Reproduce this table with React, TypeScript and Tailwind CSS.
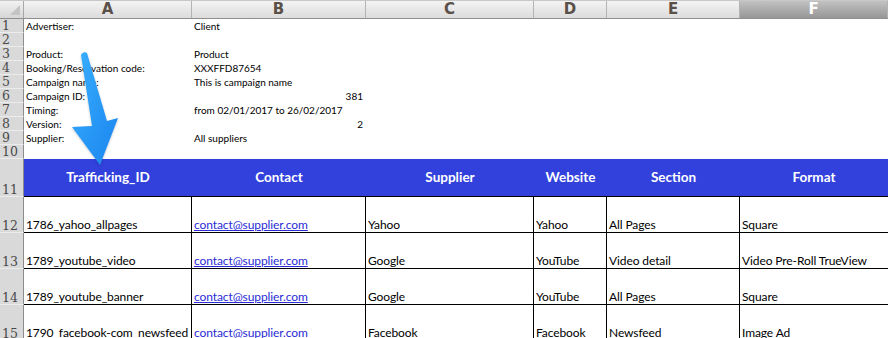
const cols = [
  { key: "A", w: "w-[168px]" },
  { key: "B", w: "w-[174px]" },
  { key: "C", w: "w-[168px]" },
  { key: "D", w: "w-[73px]" },
  { key: "E", w: "w-[133px]" },
  { key: "F", w: "flex-1" },
];

const info: [string, string, string?][] = [
  ["Advertiser:", "Client"],
  ["", ""],
  ["Product:", "Product"],
  ["Booking/Reservation code:", "XXXFFD87654"],
  ["Campaign name:", "This is campaign name"],
  ["Campaign ID:", "", "381"],
  ["Timing:", "from 02/01/2017 to 26/02/2017"],
  ["Version:", "", "2"],
  ["Supplier:", "All suppliers"],
  ["", ""],
];

const heads = ["Trafficking_ID", "Contact", "Supplier", "Website", "Section", "Format"];

const rows = [
  ["1786_yahoo_allpages", "contact@supplier.com", "Yahoo", "Yahoo", "All Pages", "Square"],
  ["1789_youtube_video", "contact@supplier.com", "Google", "YouTube", "Video detail", "Video Pre-Roll TrueView"],
  ["1789_youtube_banner", "contact@supplier.com", "Google", "YouTube", "All Pages", "Square"],
  ["1790_facebook-com_newsfeed", "contact@supplier.com", "Facebook", "Facebook", "Newsfeed", "Image Ad"],
];

const cellFont = { fontFamily: "Lato, 'Open Sans', sans-serif" };

function RowNum({ n, h }: { n: number; h: string }) {
  return (
    <div
      className={`w-[24px] shrink-0 ${h} bg-[#d9d9d9] border-r border-[#8c8c8c] border-b border-b-[#ececec] flex items-end pl-[2px] text-[12.5px] leading-[13px] text-[#4a4a4a]`}
      style={{ fontFamily: "'DejaVu Serif', 'Liberation Serif', serif" }}
    >
      {n}
    </div>
  );
}

export default function App() {
  return (
    <div className="relative w-[888px] h-[338px] overflow-hidden bg-white">
      {/* column letters */}
      <div className="flex h-[19px] border-b border-[#8f8f8f] border-t border-t-[#c8c8c8]">
        <div className="w-[24px] shrink-0 bg-gradient-to-b from-[#f2f2f2] to-[#d6d6d6] border-r border-[#a8a8a8] relative">
          <div className="absolute right-[3px] bottom-[3px] w-0 h-0 border-l-[10px] border-l-transparent border-b-[10px] border-b-[#c4c4c4]" />
        </div>
        {cols.map((c) => (
          <div
            key={c.key}
            className={`${c.w} shrink-0 flex items-center justify-center border-r border-[#b3b3b3] text-[15px] font-bold ${
              c.key === "F"
                ? "bg-gradient-to-b from-[#c2c2c2] to-[#979797] text-white"
                : "bg-gradient-to-b from-[#f3f3f3] to-[#dcdcdc] text-[#5a5048]"
            }`}
            style={{ fontFamily: "'DejaVu Sans', sans-serif" }}
          >
            {c.key}
          </div>
        ))}
      </div>

      {/* info rows */}
      {info.map((r, i) => (
        <div key={i} className="flex h-[14px]">
          <RowNum n={i + 1} h="h-[14px]" />
          <div className="w-[168px] shrink-0 pl-[2px] text-[10px] leading-[14px] text-black" style={cellFont}>
            {r[0]}
          </div>
          <div className="w-[174px] shrink-0 pl-[2px] pr-[3px] text-[10px] leading-[14px] text-black flex" style={cellFont}>
            <span className="flex-1">{r[1]}</span>
            {r[2] && <span>{r[2]}</span>}
          </div>
        </div>
      ))}

      {/* table header */}
      <div className="flex h-[38px]">
        <RowNum n={11} h="h-[38px]" />
        <div className="flex flex-1 bg-[#3241dc] border-b border-black">
          {cols.map((c, i) => (
            <div
              key={c.key}
              className={`${c.w} shrink-0 flex items-center justify-center text-white font-bold text-[13.5px]`}
              style={cellFont}
            >
              {heads[i]}
            </div>
          ))}
        </div>
      </div>

      {/* data rows */}
      {rows.map((r, ri) => (
        <div key={ri} className="flex h-[36px]">
          <RowNum n={12 + ri} h="h-[36px]" />
          <div className="flex flex-1 border-b border-black">
            {cols.map((c, ci) => (
              <div
                key={c.key}
                className={`${c.w} shrink-0 flex items-end pl-[2px] text-[12px] tracking-[-0.1px] leading-[15px] whitespace-nowrap overflow-hidden ${
                  ci < 5 ? "border-r border-black" : ""
                } ${ci === 1 ? "text-[#2a2ad6] underline" : "text-black"}`}
                style={cellFont}
              >
                {r[ci]}
              </div>
            ))}
          </div>
        </div>
      ))}

      {/* annotation arrow */}
      <svg className="absolute left-0 top-0 pointer-events-none" width="140" height="180" viewBox="0 0 140 180">
        <defs>
          <linearGradient id="ag" x1="0" y1="0" x2="1" y2="1">
            <stop offset="0" stopColor="#3ab0ff" />
            <stop offset="1" stopColor="#1a84ee" />
          </linearGradient>
          <filter id="sh" x="-30%" y="-30%" width="160%" height="160%">
            <feDropShadow dx="0" dy="1" stdDeviation="1.2" floodColor="#000" floodOpacity="0.25" />
          </filter>
        </defs>
        <path
          d="M81 55 Q83 51 87 53 L107 121 L118 118 L100 165 L72 127 L92 126 Z"
          fill="url(#ag)"
          filter="url(#sh)"
        />
      </svg>
    </div>
  );
}
